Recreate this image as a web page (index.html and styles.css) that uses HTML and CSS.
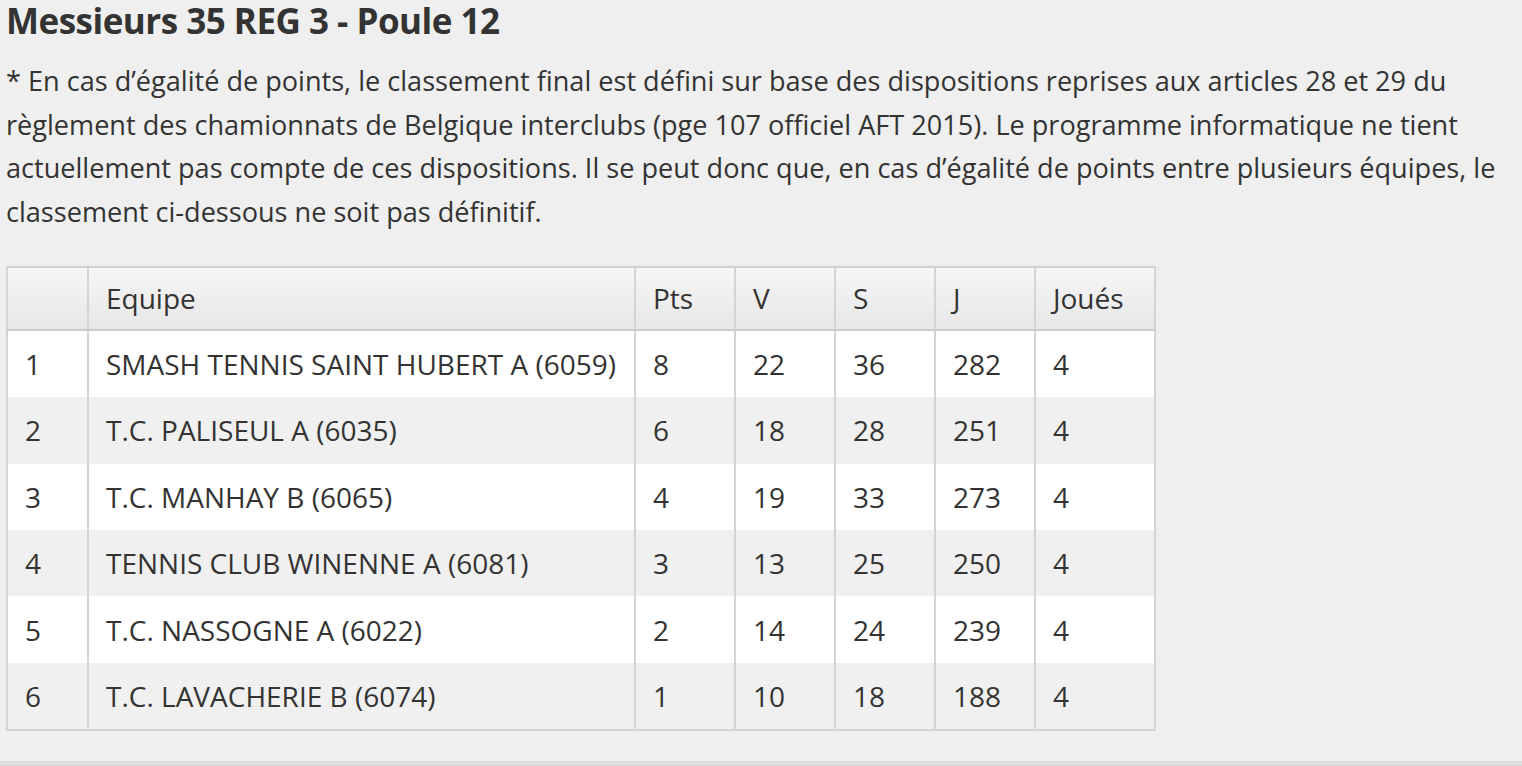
FILE: index.html
```html
<!DOCTYPE html>
<html lang="fr">
<head>
<meta charset="utf-8">
<link rel="stylesheet" href="styles.css">
</head>
<body>
<div class="content">
  <h1 class="title">Messieurs 35 REG 3 - Poule 12</h1>
  <p class="note">* En cas d’égalité de points, le classement final est défini sur base des dispositions reprises aux articles 28 et 29 du règlement des chamionnats de Belgique interclubs (pge 107 officiel AFT 2015). Le programme informatique ne tient actuellement pas compte de ces dispositions. Il se peut donc que, en cas d’égalité de points entre plusieurs équipes, le classement ci-dessous ne soit pas définitif.</p>
  <table class="ranking">
    <colgroup>
      <col class="w-rank"><col class="w-team"><col class="w-num"><col class="w-num"><col class="w-num"><col class="w-num"><col class="w-played">
    </colgroup>
    <thead>
      <tr><th></th><th>Equipe</th><th>Pts</th><th>V</th><th>S</th><th>J</th><th>Joués</th></tr>
    </thead>
    <tbody>
      <tr><td>1</td><td>SMASH TENNIS SAINT HUBERT A (6059)</td><td>8</td><td>22</td><td>36</td><td>282</td><td>4</td></tr>
      <tr><td>2</td><td>T.C. PALISEUL A (6035)</td><td>6</td><td>18</td><td>28</td><td>251</td><td>4</td></tr>
      <tr><td>3</td><td>T.C. MANHAY B (6065)</td><td>4</td><td>19</td><td>33</td><td>273</td><td>4</td></tr>
      <tr><td>4</td><td>TENNIS CLUB WINENNE A (6081)</td><td>3</td><td>13</td><td>25</td><td>250</td><td>4</td></tr>
      <tr><td>5</td><td>T.C. NASSOGNE A (6022)</td><td>2</td><td>14</td><td>24</td><td>239</td><td>4</td></tr>
      <tr><td>6</td><td>T.C. LAVACHERIE B (6074)</td><td>1</td><td>10</td><td>18</td><td>188</td><td>4</td></tr>
    </tbody>
  </table>
</div>
<div class="footer-line"></div>
</body>
</html>
```

FILE: styles.css
```css
html, body {
  margin: 0;
  padding: 0;
  background: #efefef;
  color: #333;
  font-family: "Open Sans", "Noto Sans", sans-serif;
}
.content {
  padding: 0 6px;
  height: 761px;
  box-sizing: border-box;
  overflow: hidden;
}
.title {
  margin: -3px 0 0;
  font-size: 35px;
  line-height: 47px;
  font-weight: 700;
  letter-spacing: -0.5px;
}
.note {
  margin: 15px 0 0;
  font-size: 27.1px;
  line-height: 43.7px;
}
.ranking {
  margin-top: 32px;
  width: 1150px;
  table-layout: fixed;
  border-collapse: collapse;
  border: 2px solid #d2d2d2;
  font-size: 28px;
}
.w-rank { width: 81px; }
.w-team { width: 547px; }
.w-num { width: 100px; }
.w-played { width: 120px; }
.ranking th, .ranking td {
  border-left: 2px solid #d4d4d4;
  border-right: 2px solid #d4d4d4;
  padding: 0 0 0 17px;
  text-align: left;
  font-weight: 400;
  white-space: nowrap;
  height: 66.4px;
  vertical-align: middle;
}
.ranking thead th {
  height: 61px;
  background: linear-gradient(#f6f6f6, #e8e7e7);
  border-bottom: 2px solid #cbcbcb;
}
.ranking tbody tr:nth-child(odd) td { background: #ffffff; }
.ranking tbody tr:nth-child(even) td { background: #f0f0f0; }
.footer-line {
  height: 5px;
  background: #dcdcdc;
}
```
